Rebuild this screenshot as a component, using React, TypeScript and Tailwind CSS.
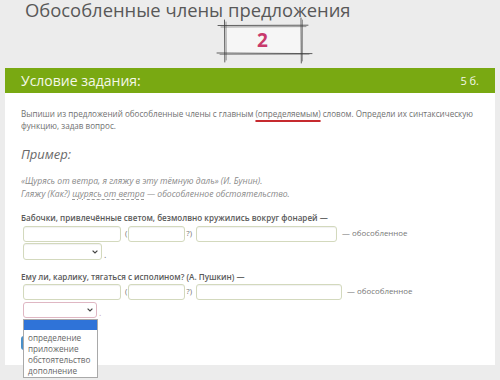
import React from 'react';

const inputCls = 'h-[16px] rounded-[3px] border border-[#d3d9bd] bg-white shadow-[inset_0_1px_1px_rgba(0,0,0,0.06)]';

function Chevron() {
  return (
    <svg width="6" height="4" viewBox="0 0 6 4" className="text-[#444]">
      <path d="M0.6 0.6 L3 3 L5.4 0.6" fill="none" stroke="currentColor" strokeWidth="1.2" />
    </svg>
  );
}

function SketchBox() {
  return (
    <div className="relative ml-[214px] -mt-[4px] w-[100px] h-[48px]">
      <svg width="100" height="48" viewBox="0 0 100 48" className="absolute inset-0">
        <rect x="11" y="10" width="76" height="27" fill="#f6f6f6" />
        <g stroke="#3b3b3b" strokeWidth="0.8" fill="none" strokeLinecap="round">
          <path d="M4 9.5 L94 9.2" />
          <path d="M7 11 L92 10.6" strokeWidth="0.5" />
          <path d="M3 37 L98 37.6" />
          <path d="M6 38.4 L95 38.2" strokeWidth="0.5" />
          <path d="M10.5 4 L10.8 46" />
          <path d="M12 6 L12.2 44" strokeWidth="0.5" />
          <path d="M87 2 L87.3 47" />
          <path d="M88.5 4 L88.4 45" strokeWidth="0.5" />
        </g>
      </svg>
      <span className="absolute left-[43px] top-[11px] text-[19px] leading-[26px] font-bold text-[#c83a6c]">2</span>
    </div>
  );
}

function AnswerRow({ wide }: { wide: string }) {
  return (
    <div className="flex items-center h-[16px] pl-[2px] text-[7.9px] text-[#777]">
      <div className={`${inputCls} w-[98px]`} />
      <span className="ml-[4px] mr-[1px]">(</span>
      <div className={`${inputCls} w-[57px]`} />
      <span className="ml-[1px] mr-[4px]">?)</span>
      <div className={`${inputCls} ${wide}`} />
      <span className="ml-[5px]">— обособленное</span>
    </div>
  );
}

export default function App() {
  return (
    <div className="w-[500px] h-[380px] overflow-hidden bg-[#ececec] font-['Open_Sans','Liberation_Sans',sans-serif]">
      <div className="pl-[25px] h-[20px] text-[18.4px] leading-[20px] text-[#585858] whitespace-nowrap">Обособленные члены предложения</div>
      <SketchBox />

      <div className="mt-[4px] mx-[5px] h-[25px] bg-[#79a912] flex items-center justify-between px-[16px] text-[#f4f8e8]">
        <span className="text-[14px] leading-[20px]">Условие задания:</span>
        <span className="text-[11px] leading-[16px]">5 б.</span>
      </div>

      <div className="mx-[5px] h-[272px] bg-white px-[16px] pt-[15px]">
        <p className="text-[8.1px] leading-[12px] text-[#707070] whitespace-nowrap">
          Выпиши из предложений обособленные члены с главным{' '}
          <span className="underline decoration-[#c62a2f] decoration-[1.5px] underline-offset-[3px]">(определяемым)</span>{' '}
          словом. Определи их синтаксическую
          <br />
          функцию, задав вопрос.
        </p>

        <p className="mt-[14px] text-[13px] leading-[16px] italic text-[#6a6a6a]">Пример:</p>

        <div className="mt-[13px] text-[8.6px] leading-[13px] italic text-[#8a8a8a]">
          <p>«Щурясь от ветра, я гляжу в эту тёмную даль» (И. Бунин).</p>
          <p>
            Гляжу (Как?){' '}
            <span className="underline decoration-dashed decoration-[#9a9a9a] underline-offset-[2px]">щурясь от ветра</span>{' '}
            — обособленное обстоятельство.
          </p>
        </div>

        <p className="mt-[11px] text-[8.1px] leading-[12px] font-semibold text-[#595959]">
          Бабочки, привлечённые светом, безмолвно кружились вокруг фонарей —
        </p>
        <div className="mt-[2px]">
          <AnswerRow wide="w-[141px]" />
        </div>
        <div className="mt-[1px] pl-[2px] flex items-end text-[9px] text-[#777]">
          <div className={`${inputCls} h-[17px] w-[79px] flex items-center justify-end pr-[3px]`}>
            <Chevron />
          </div>
          <span className="ml-[2px] leading-[10px]">.</span>
        </div>

        <p className="mt-[11px] text-[8.1px] leading-[12px] font-semibold text-[#595959]">
          Ему ли, карлику, тягаться с исполином? (А. Пушкин) —
        </p>
        <div className="mt-[1px]">
          <AnswerRow wide="w-[146px]" />
        </div>
        <div className="relative mt-[2px] pl-[2px] flex items-end text-[9px] text-[#777]">
          <div className="h-[16px] w-[74px] rounded-[3px] border border-[#dfb7c3] bg-white flex items-center justify-end pr-[3px]">
            <Chevron />
          </div>
          <span className="ml-[2px] leading-[10px] text-[#c9a6b0]">.</span>
          <div className="absolute left-[2px] top-[17px] z-10 w-[75px] h-[59px] border border-[#a9a9a9] bg-white text-[8.2px] leading-[11.1px] text-[#666]">
            <div className="h-[10px] bg-[#2f73d8]" />
            <div className="pl-[4px] pt-[2px] whitespace-nowrap">
              <div>определение</div>
              <div>приложение</div>
              <div>обстоятельство</div>
              <div>дополнение</div>
            </div>
          </div>
        </div>

        <div className="mt-[18px] h-[14px] w-[60px] rounded-[3px] bg-[#4a90c9]" />
      </div>
    </div>
  );
}
